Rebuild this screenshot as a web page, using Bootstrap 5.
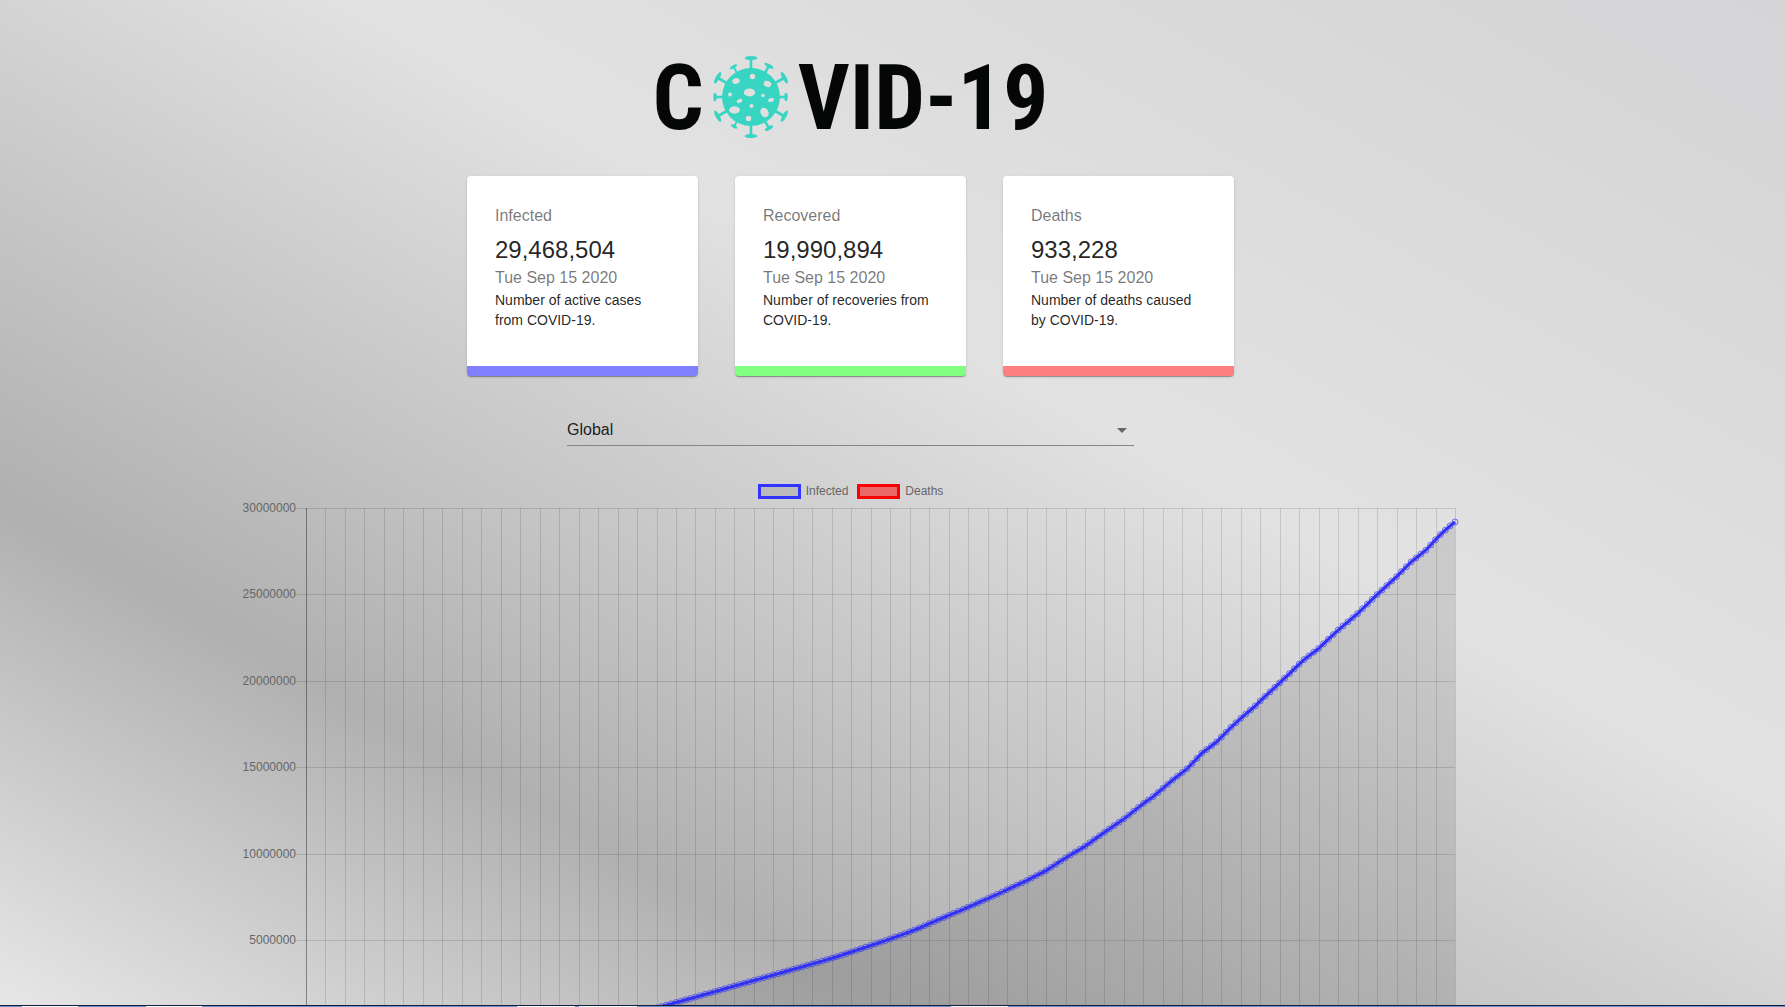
<!DOCTYPE html>
<html lang="en">
<head>
<meta charset="utf-8">
<meta name="viewport" content="width=device-width, initial-scale=1">
<title>COVID-19 Tracker</title>
<link href="https://cdn.jsdelivr.net/npm/bootstrap@5.3.0/dist/css/bootstrap.min.css" rel="stylesheet">
<style>
  body {
    font-family: "Liberation Sans", Arial, sans-serif;
    color: rgba(0, 0, 0, .87);
    background: linear-gradient(to bottom left, #d5d5d8 0%, #d7d7d8 10%, #e2e2e2 40%, #b0b0b0 75%, #e7e7e7 100%) fixed;
  }
  .tracker { padding: 56px 84px 0 0; }
  .logo {
    height: 82px;
    margin-bottom: 38px;
    gap: 8px;
    color: #050706;
    font: bold 90px/82px "Liberation Sans Narrow", "Roboto Condensed", "Liberation Sans", sans-serif;
  }
  .logo span { padding-top: 4px; }
  .logo svg { width: 78px; height: 84px; }
  .stats { gap: 37px; }
  .stat {
    width: 231px;
    padding: 28px 28px 36px;
    background: #fff;
    border-bottom: 10px solid;
    border-radius: 4px;
    box-shadow: 0 2px 1px -1px rgba(0,0,0,.2), 0 1px 1px rgba(0,0,0,.14), 0 1px 3px rgba(0,0,0,.12);
  }
  .stat-infected { border-color: #8080ff; }
  .stat-recovered { border-color: #80ff80; }
  .stat-deaths { border-color: #ff8080; }
  .stat-label { font-size: 16px; line-height: 24px; margin-bottom: 6px; color: rgba(0,0,0,.54); }
  .stat-number { font-size: 24px; line-height: 32px; font-weight: 400; margin: 0; }
  .stat-date { font-size: 16px; line-height: 24px; margin: 0; color: rgba(0,0,0,.54); }
  .stat-text { font-size: 14px; line-height: 20px; margin: 0; }
  .country-picker { width: 33.333%; margin: 38px 0 37px; }
  .country-picker select {
    height: 32px;
    padding: 0 24px 0 0;
    font-size: 16px;
    line-height: 24px;
    color: rgba(0,0,0,.87);
    border: 0;
    border-bottom: 1px solid #858585;
    border-radius: 0;
    background: transparent url("data:image/svg+xml,%3Csvg xmlns='http://www.w3.org/2000/svg' viewBox='0 0 24 24'%3E%3Cpath d='M7 10l5 5 5-5z' fill='%23666'/%3E%3C/svg%3E") right center / 24px 24px no-repeat;
  }
  .chart { width: 72%; }
  .chart-legend { gap: 9px; height: 16px; margin-bottom: 9px; font-size: 12px; line-height: 14px; color: #666; }
  .chart-legend span { gap: 5px; }
  .chart-legend i { width: 43px; height: 15px; border: 3px solid; }
  .key-infected { border-color: #3333ff !important; background: rgba(0,0,0,.1); }
  .key-deaths { border-color: red !important; background: rgba(255,0,0,.5); }
  .plot { width: 100%; height: 540px; font-size: 12px; fill: #666; overflow: visible; }
  .taskbar { height: 2px; background: #6d92c9; border-top: 1px solid #14203a; }
  .taskbar b { height: 1px; background: #f4f7fa; }
</style>
<script src="https://cdn.jsdelivr.net/npm/bootstrap@5.3.0/dist/js/bootstrap.bundle.min.js"></script>
</head>
<body class="vh-100 overflow-hidden">
<main class="tracker d-flex flex-column align-items-center">
  <h1 class="logo d-flex align-items-center justify-content-center">
    <span>C</span>
    <svg viewBox="-39 -42 78 84" aria-hidden="true" fill="#39d5c3" stroke="#39d5c3">
      <circle r="29" stroke="none"/>
      <g stroke-width="2.6">
        <g><path d="M0-28V-39"/><ellipse cy="-39" rx="6.4" ry="2" stroke="none"/></g>
        <g transform="rotate(180)"><path d="M0-28V-39"/><ellipse cy="-39" rx="6.4" ry="2" stroke="none"/></g>
        <g transform="rotate(60)"><path d="M0-28V-38"/><ellipse cy="-38.5" rx="6.4" ry="2" stroke="none"/></g>
        <g transform="rotate(120)"><path d="M0-28V-38"/><ellipse cy="-38.5" rx="6.4" ry="2" stroke="none"/></g>
        <g transform="rotate(240)"><path d="M0-28V-38"/><ellipse cy="-38.5" rx="6.4" ry="2" stroke="none"/></g>
        <g transform="rotate(300)"><path d="M0-28V-38"/><ellipse cy="-38.5" rx="6.4" ry="2" stroke="none"/></g>
        <g transform="rotate(90)"><path d="M0-28V-35"/><ellipse cy="-35" rx="4.2" ry="1.7" stroke="none"/></g>
        <g transform="rotate(270)"><path d="M0-28V-36"/><ellipse cy="-36" rx="4.2" ry="1.7" stroke="none"/></g>
        <g transform="rotate(30)"><path d="M0-28V-36"/><ellipse cy="-36" rx="5" ry="1.7" stroke="none"/></g>
        <g transform="rotate(150)"><path d="M0-28V-36"/><ellipse cy="-36" rx="4.6" ry="1.7" stroke="none"/></g>
        <g transform="rotate(210)"><path d="M0-28V-34" stroke-width="2"/><ellipse cy="-34" rx="3.5" ry="1.4" stroke="none"/></g>
        <g transform="rotate(330)"><path d="M0-28V-35" stroke-width="2"/><ellipse cy="-35" rx="4" ry="1.5" stroke="none"/></g>
      </g>
      <g fill="#dfdfdf" stroke="none">
        <ellipse cx="-1.5" cy="-4.5" rx="5.7" ry="3.9"/>
        <circle cx="1.5" cy="-20.5" r="2.7"/>
        <ellipse cx="-15" cy="-16" rx="3.8" ry="2.9" transform="rotate(-15 -15 -16)"/>
        <ellipse cx="16.5" cy="-13" rx="3.9" ry="2.9" transform="rotate(20 16.5 -13)"/>
        <circle cx="-21" cy="-2.5" r="2"/>
        <circle cx="12" cy="-1.5" r="1.8"/>
        <ellipse cx="-11.5" cy="4" rx="2.9" ry="1.9" transform="rotate(-20 -11.5 4)"/>
        <ellipse cx="20" cy="3" rx="3" ry="1.9" transform="rotate(-20 20 3)"/>
        <circle cx=".5" cy="9" r="2"/>
        <ellipse cx="-16.5" cy="13" rx="5.4" ry="3.7"/>
        <ellipse cx="13.5" cy="15.5" rx="3.9" ry="5" transform="rotate(-30 13.5 15.5)"/>
        <circle cx="-2.5" cy="21.5" r="2.7"/>
      </g>
    </svg>
    <span>VID-19</span>
  </h1>

  <section class="stats d-flex flex-wrap justify-content-center">
    <article class="stat stat-infected">
      <p class="stat-label">Infected</p>
      <h2 class="stat-number">29,468,504</h2>
      <p class="stat-date">Tue Sep 15 2020</p>
      <p class="stat-text">Number of active cases from COVID-19.</p>
    </article>
    <article class="stat stat-recovered">
      <p class="stat-label">Recovered</p>
      <h2 class="stat-number">19,990,894</h2>
      <p class="stat-date">Tue Sep 15 2020</p>
      <p class="stat-text">Number of recoveries from COVID-19.</p>
    </article>
    <article class="stat stat-deaths">
      <p class="stat-label">Deaths</p>
      <h2 class="stat-number">933,228</h2>
      <p class="stat-date">Tue Sep 15 2020</p>
      <p class="stat-text">Number of deaths caused by COVID-19.</p>
    </article>
  </section>

  <div class="country-picker">
    <select class="form-select" aria-label="Country">
      <option>Global</option>
    </select>
  </div>

  <section class="chart">
    <div class="chart-legend d-flex justify-content-center align-items-center">
      <span class="d-flex align-items-center"><i class="key-infected"></i>Infected</span>
      <span class="d-flex align-items-center"><i class="key-deaths"></i>Deaths</span>
    </div>
    <svg class="plot d-block" id="plot" role="img" aria-label="Infected over time"></svg>
  </section>
</main>

<div class="taskbar fixed-bottom" id="taskbar"></div>

<script>
  // Cumulative cases in millions, as [day since 22 January, cases]
  const knots = [[0,0],[50,.15],[60,.35],[68,.8],[74,1.26],[80,1.73],[92,2.69],[104,3.65],[108,3.98],[112,4.34],[119,5],
    [123,5.4],[126,5.73],[130,6.22],[136,6.93],[142,7.68],[148,8.47],[152,9.05],[156,9.78],[160,10.46],[164,11.27],
    [168,12.04],[172,12.93],[174,13.33],[176,13.81],[178,14.29],[181,14.95],[184,15.84],[187,16.49],
    [190,17.34],[192,17.86],[195,18.58],[196,18.87],[200,19.91],[205,21.26],[208,21.9],[212,22.97],
    [216,23.92],[220,25.02],[224,26.06],[227,26.91],[230,27.59],[233,28.49],[235,29],[236,29.22]];
  const days = 236, maxCases = 30;

  function casesOn(day) {
    let k = 1;
    while (knots[k][0] < day) k++;
    const [d0, c0] = knots[k - 1], [d1, c1] = knots[k];
    return c0 + (c1 - c0) * (day - d0) / (d1 - d0);
  }

  function draw() {
    const svg = document.getElementById('plot');
    const left = 68, right = svg.clientWidth - 8, bottom = 519;
    const x = day => left + (right - left) * day / days;
    const y = cases => bottom - (bottom - .5) * cases / maxCases;
    let out = '';
    for (let c = 5; c <= maxCases; c += 5) {
      const gy = Math.floor(y(c)) + .5;
      out += `<path d="M${left - 10} ${gy}H${right}" stroke="#000" stroke-opacity=".12"/>`;
      out += `<text x="${left - 10}" y="${gy + 3}" text-anchor="end">${c * 1000000}</text>`;
    }
    for (let d = 0; d <= days; d += 4) {
      const gx = Math.round(x(d)) + .5;
      out += `<path d="M${gx} 0V${bottom + 10}" stroke="#000" stroke-opacity="${d ? .12 : .38}"/>`;
    }
    let line = '', dots = '';
    for (let d = 0; d <= days; d++) {
      const px = x(d).toFixed(1), py = y(casesOn(d)).toFixed(1);
      line += (d ? 'L' : 'M') + px + ' ' + py;
      dots += `<circle cx="${px}" cy="${py}" r="3"/>`;
    }
    out += `<path d="${line}L${right} ${bottom}H${left}Z" fill="#000" fill-opacity=".1"/>`;
    out += `<path d="${line}" fill="none" stroke="#33f" stroke-width="3"/>`;
    out += `<g fill="#000" fill-opacity=".04" stroke="#33f" stroke-opacity=".65">${dots}</g>`;
    svg.innerHTML = out;
  }
  draw();
  addEventListener('resize', draw);

  // Open windows on the desktop bar: start and end of each light segment
  document.getElementById('taskbar').innerHTML =
    [[22,78],[146,202],[517,575],[579,637],[951,1008]]
      .map(([a, b]) => `<b class="position-absolute top-0" style="left:${a}px;width:${b - a}px"></b>`).join('');
</script>
</body>
</html>
